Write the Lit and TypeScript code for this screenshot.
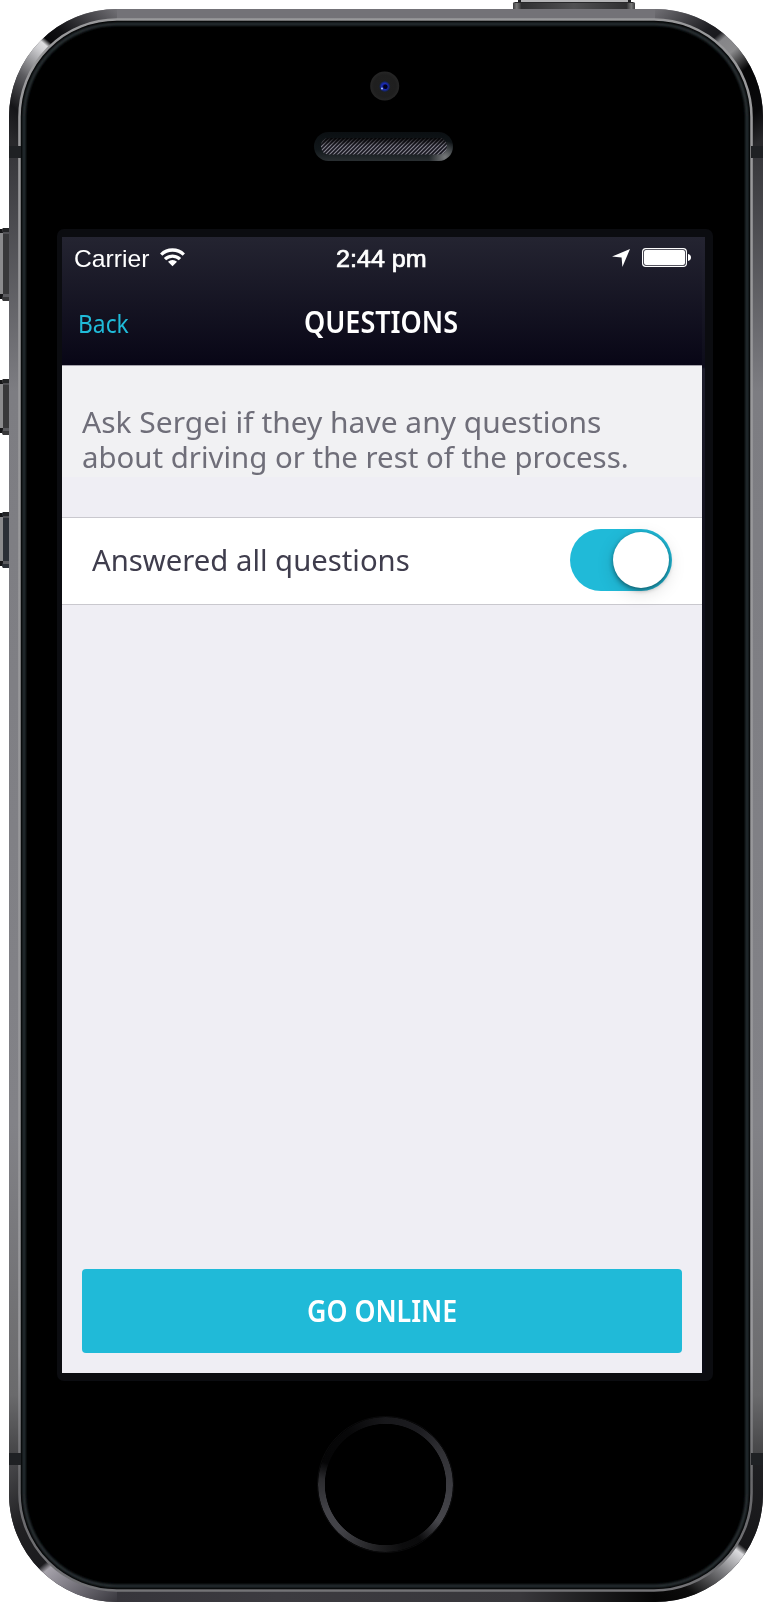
import { LitElement, html, css, svg } from "lit";
import { customElement, property, query } from "lit/decorators.js";

/** One line of text, condensed or widened to a given measure. */
@customElement("fit-text")
class FitText extends LitElement {
  @property({ type: Number }) measure = 0;
  @query("span") line!: HTMLSpanElement;
  static styles = css`
    :host { display: block; white-space: nowrap; }
    span { display: inline-block; transform-origin: 0 50%; }
  `;
  render() {
    return html`<span><slot></slot></span>`;
  }
  async firstUpdated() {
    this.fit();
    await document.fonts.ready;
    this.fit();
  }
  fit() {
    const w = this.line.offsetWidth;
    this.style.width = `${this.measure}px`;
    if (w) this.line.style.transform = `scaleX(${this.measure / w})`;
  }
}

/** Metal body, side keys, camera, speaker and home button. */
@customElement("phone-body")
class PhoneBody extends LitElement {
  static styles = css`
    :host { display: block; }
    svg { display: block; }
  `;
  sideKey(y: number, h: number, tone: string) {
    return svg`
      <rect x="0" y=${y + 2} width="5" height=${h - 4} fill="#8b8b8d"/>
      <rect x="0" y=${y + 1} width="3" height="4" fill="#151517"/>
      <rect x="0" y=${y + h - 7} width="3" height="5" fill="#151517"/>
      <path d="M3 ${y}H9V${y + h}H3Q1 ${y + h - 2} 3 ${y + h - 6}V${y + 5}Q1 ${y + 1} 3 ${y}Z" fill=${tone}/>
      <rect x="3" y=${y} width="6" height="4" fill="#242527"/>
      <rect x="3" y=${y + 4} width="6" height="2" fill="#505054"/>
      <rect x="3" y=${y + h - 7} width="6" height="3" fill="#5a5a5e"/>`;
  }
  render() {
    return html`<svg width="763" height="1602" viewBox="0 0 763 1602">
      <defs>
        <linearGradient id="side" x1="0" y1="0" x2="0" y2="1">
          <stop offset="0" stop-color="#737277"/><stop offset=".06" stop-color="#2a2a2d"/>
          <stop offset=".094" stop-color="#38383c"/><stop offset=".24" stop-color="#7d7d82"/>
          <stop offset=".7" stop-color="#828287"/><stop offset=".87" stop-color="#6a6a6c"/>
          <stop offset=".914" stop-color="#3e3e40"/><stop offset=".95" stop-color="#1c1c1e"/>
          <stop offset="1" stop-color="#343338"/>
        </linearGradient>
        <linearGradient id="tl" gradientUnits="userSpaceOnUse" x1="10" y1="140" x2="120" y2="10">
          <stop offset="0" stop-color="#29292c"/><stop offset=".16" stop-color="#151518"/>
          <stop offset=".34" stop-color="#5c5c60"/><stop offset=".52" stop-color="#d0d0d3"/>
          <stop offset=".56" stop-color="#dedee0"/><stop offset=".59" stop-color="#08080a"/>
          <stop offset=".68" stop-color="#101013"/><stop offset="1" stop-color="#737277"/>
        </linearGradient>
        <linearGradient id="tr" gradientUnits="userSpaceOnUse" x1="652" y1="10" x2="762" y2="140">
          <stop offset="0" stop-color="#737277"/><stop offset=".3" stop-color="#1d1d21"/>
          <stop offset=".36" stop-color="#1a1a1e"/><stop offset=".4" stop-color="#858588"/>
          <stop offset=".49" stop-color="#8a8a8c"/><stop offset=".62" stop-color="#050506"/>
          <stop offset=".85" stop-color="#08080a"/><stop offset="1" stop-color="#29292c"/>
        </linearGradient>
        <linearGradient id="bl" gradientUnits="userSpaceOnUse" x1="10" y1="1465" x2="120" y2="1601">
          <stop offset="0" stop-color="#47474a"/><stop offset=".3" stop-color="#202022"/>
          <stop offset=".56" stop-color="#1b1b1e"/><stop offset=".6" stop-color="#a5a2aa"/>
          <stop offset=".7" stop-color="#8a8790"/><stop offset="1" stop-color="#36353b"/>
        </linearGradient>
        <linearGradient id="br" gradientUnits="userSpaceOnUse" x1="660" y1="1601" x2="762" y2="1465">
          <stop offset="0" stop-color="#050505"/><stop offset=".15" stop-color="#0c0c0c"/>
          <stop offset=".35" stop-color="#77777a"/><stop offset=".51" stop-color="#dcdcdf"/>
          <stop offset=".55" stop-color="#161618"/><stop offset="1" stop-color="#1f1f22"/>
        </linearGradient>
        <linearGradient id="bottom">
          <stop offset="0" stop-color="#36353b"/><stop offset=".3" stop-color="#3c3b40"/>
          <stop offset=".75" stop-color="#38373b"/><stop offset="1" stop-color="#050505"/>
        </linearGradient>
        <linearGradient id="rim" x1="0" y1="0" x2="0" y2="1">
          <stop offset="0" stop-color="#99999b"/><stop offset=".85" stop-color="#98989b"/>
          <stop offset=".93" stop-color="#68686b"/><stop offset="1" stop-color="#737376"/>
        </linearGradient>
        <linearGradient id="top-key">
          <stop offset="0" stop-color="#3c3c3e"/><stop offset=".03" stop-color="#777"/>
          <stop offset=".07" stop-color="#303032"/><stop offset=".5" stop-color="#505052"/>
          <stop offset=".93" stop-color="#303032"/><stop offset=".97" stop-color="#777"/>
          <stop offset="1" stop-color="#3c3c3e"/>
        </linearGradient>
        <radialGradient id="camera"><stop offset="0" stop-color="#202020"/>
          <stop offset=".75" stop-color="#1f1f1f"/><stop offset="1" stop-color="#262626"/></radialGradient>
        <radialGradient id="lens"><stop offset="0" stop-color="#04042a"/>
          <stop offset=".55" stop-color="#1a2bb8"/><stop offset="1" stop-color="#152030"/></radialGradient>
        <linearGradient id="slot" x1="0" y1="0" x2="0" y2="1">
          <stop offset="0" stop-color="#0b0f12"/><stop offset=".6" stop-color="#11171a"/>
          <stop offset="1" stop-color="#292e31"/></linearGradient>
        <radialGradient id="glint" gradientUnits="userSpaceOnUse" cx="445" cy="157" r="16">
          <stop offset="0" stop-color="#77797b"/><stop offset="1" stop-color="#77797b" stop-opacity="0"/></radialGradient>
        <pattern id="mesh" width="4" height="4" patternUnits="userSpaceOnUse">
          <rect width="4" height="4" fill="#17161f"/>
          <path d="M-1 5L5 -1M-1 1L1 -1M3 5L5 3" stroke="#85848f" stroke-width="1.2"/>
        </pattern>
        <linearGradient id="shade" x1="0" y1="0" x2="0" y2="1">
          <stop offset="0" stop-color="#000" stop-opacity=".85"/><stop offset=".5" stop-color="#000" stop-opacity="0"/></linearGradient>
        <filter id="soft" x="-5%" y="-5%" width="110%" height="110%"><feGaussianBlur stdDeviation="1"/></filter>
      </defs>

      <rect x="519" y="0" width="112" height="3" fill="#b5b5b7"/>
      <path d="M518 0h3v2h-3zM628 0h3v2h-3z" fill="#202022"/>
      <rect x="513" y="2" width="122" height="8" rx="1.5" fill="url(#top-key)"/>
      <rect x="515" y="2" width="118" height="1" fill="#29292b"/>
      ${this.sideKey(228, 73, "#38383a")}
      ${this.sideKey(379, 56, "#38383a")}
      ${this.sideKey(512, 56, "#2b2f36")}

      <rect x="9" y="9" width="754" height="1593" rx="108" fill="url(#side)"/>
      <rect x="117" y="9" width="538" height="14" fill="#737277"/>
      <rect x="117" y="1588" width="538" height="14" fill="url(#bottom)"/>
      <g fill="none" stroke-width="12">
        <path d="M15 146V117A102 102 0 0 1 117 15" stroke="url(#tl)"/>
        <path d="M655 15A102 102 0 0 1 757 117V146" stroke="url(#tr)"/>
        <path d="M15 1465V1494A102 102 0 0 0 117 1596" stroke="url(#bl)"/>
        <path d="M655 1596A102 102 0 0 0 757 1494V1465" stroke="url(#br)"/>
      </g>
      <rect x="19" y="19" width="733" height="1572" rx="98" fill="#000"/>
      <rect x="19.5" y="19.5" width="732" height="1571" rx="97.5" fill="none" stroke="url(#rim)" stroke-width="2.6"/>
      <rect x="24" y="24" width="723" height="1562" rx="93" fill="none" stroke="#293136" stroke-width="3.2" filter="url(#soft)"/>
      <g fill="#1f2124">
        <rect x="9" y="146" width="12" height="12"/><rect x="751" y="146" width="12" height="12"/>
        <rect x="9" y="1453" width="12" height="12"/><rect x="751" y="1453" width="12" height="12"/>
      </g>

      <circle cx="384.7" cy="86" r="14.5" fill="url(#camera)"/>
      <circle cx="384.7" cy="86.5" r="5.5" fill="url(#lens)"/>
      <circle cx="385.5" cy="86.8" r="2.2" fill="#02021c"/>
      <circle cx="382" cy="88.5" r="1" fill="#a9c0ff"/>

      <rect x="314" y="132" width="139" height="29" rx="14.5" fill="url(#slot)"/>
      <rect x="314" y="132" width="139" height="29" rx="14.5" fill="url(#glint)"/>
      <rect x="321" y="138" width="126" height="16.5" rx="8" fill="url(#mesh)"/>
      <rect x="321" y="138" width="126" height="16.5" rx="8" fill="url(#shade)"/>
    </svg>`;
  }
}

@customElement("app-root")
class AppRoot extends LitElement {
  static styles = css`
    :host {
      display: grid; width: 763px; height: 1602px; background: #fff; overflow: hidden;
      font-family: "Noto Sans", sans-serif;
    }
    phone-body, .face { grid-area: 1 / 1; }
    .face { display: flex; flex-direction: column; align-items: flex-start; padding: 229px 0 0 57px; position: relative; box-sizing: border-box; }
    .bezel { width: 656px; height: 1152px; box-sizing: border-box; padding: 8px 8px 8px 5px; border-radius: 7px; background: #0b0c10; }
    .panel { width: 643px; height: 1136px; background: linear-gradient(#242431, #0d0c1a 130px, #1e1e2c 132px, #12121e 300px, #0b0c15 520px); }
    .screen { width: 640px; height: 1136px; display: flex; flex-direction: column; background: #efeef4; }
    header { height: 129px; background: linear-gradient(#242431, #080616); color: #fff; box-sizing: border-box; border-bottom: 1px solid #a5a3ab; }
    .status { display: grid; grid-template-columns: 1fr auto 1fr; height: 40px; align-items: center; padding: 0 11px 0 12px; font: 24px/40px "Liberation Sans", sans-serif; }
    .status svg, .ring { display: block; }
    .status fit-text { padding-top: 2px; margin-bottom: -1px; }
    .carrier { display: flex; align-items: center; gap: 11px; }
    .time { -webkit-text-stroke: .7px #fff; margin-left: -2px; }
    .power { display: flex; justify-content: flex-end; align-items: center; gap: 12px; }
    .nav { display: grid; grid-template-columns: 1fr auto 1fr; padding: 1px 18px 0 16px; height: 87px; align-items: baseline; line-height: 87px; box-sizing: border-box; }
    .back { color: #20bbd9; font-size: 25.5px; }
    .title { font-size: 31px; font-weight: 650; }
    .intro { height: 151px; box-sizing: border-box; padding: 38px 20px 0; color: #6f6e79; font-size: 29.5px; line-height: 35px; background: linear-gradient(#f1f1f3 111px, #efeef4 111px); }
    .row { height: 88px; box-sizing: border-box; border: solid #c9c8ce; border-width: 1px 0; background: #fff; display: flex; align-items: center; justify-content: space-between; padding: 0 30px; color: #3f3d4d; font-size: 29px; }
    .row fit-text { padding-bottom: 4px; }
    .toggle { width: 102px; height: 62px; padding: 3px; box-sizing: border-box; border-radius: 31px; background: #20bad8; display: flex; justify-content: flex-end; margin-top: -2px; }
    .knob { width: 56px; height: 56px; border-radius: 50%; background: #fff; box-shadow: 0 5px 18px #0002, 0 2px 5px #0007; }
    .go { margin: auto 20px 20px; height: 84px; border-radius: 4px; background: #20bad8; color: #fff; font-size: 31px; font-weight: 650; display: flex; align-items: center; justify-content: center; line-height: 82px; }
    .go fit-text { height: 84px; }
    .home { box-sizing: border-box; width: 137px; height: 137px; margin: 35px 0 0 260px; border-radius: 50%; border: 1px solid #0b0b0c; display: grid; place-items: center; }
    .ring { width: 135px; height: 135px; border-radius: 50%;
      background: conic-gradient(#18181b, #1b1b1f 30deg, #303034 60deg, #3b3b40 90deg, #46464b 125deg, #0a0a0b 148deg, #0c0c0d 165deg, #222224 190deg, #434348 225deg, #434348 245deg, #2b2b2e 275deg, #050506 290deg, #070708 325deg, #18181b);
      mask: radial-gradient(circle, transparent 60.3px, #000 61px); }
  `;
  render() {
    return html`
      <phone-body></phone-body>
      <div class="face">
        <div class="bezel"><div class="panel"><main class="screen">
          <header>
            <div class="status">
              <div class="carrier">
                <fit-text measure="75">Carrier</fit-text>
                <svg width="25" height="19" viewBox="0 0 25 19">
                  <g fill="none" stroke="#fff" stroke-width="3.3">
                    <path d="M1.2 6.6A16.2 16.2 0 0 1 23.8 6.6"/>
                    <path d="M5 11.2A10.6 10.6 0 0 1 20 11.2"/>
                  </g>
                  <path d="M12.5 18.3L8 13.8A6.4 6.4 0 0 1 17 13.8Z" fill="#fff"/>
                </svg>
              </div>
              <fit-text class="time" measure="91">2:44 pm</fit-text>
              <div class="power">
                <svg width="18" height="18" viewBox="0 0 18 18"><path d="M18 0L10.4 18L9.6 8.4L0 7.6Z" fill="#fff"/></svg>
                <svg width="49" height="19" viewBox="0 0 49 19">
                  <rect x=".6" y=".6" width="43.8" height="17.8" rx="3.2" fill="none" stroke="#fff" stroke-width="1.2"/>
                  <rect x="2" y="2" width="41" height="15" rx="2" fill="#fff"/>
                  <path d="M46 6C50 6.5 50 12.5 46 13Z" fill="#fff"/>
                </svg>
              </div>
            </div>
            <div class="nav">
              <fit-text class="back" measure="51">Back</fit-text>
              <fit-text class="title" measure="154">QUESTIONS</fit-text>
              <span></span>
            </div>
          </header>
          <div class="intro">
            <fit-text measure="519">Ask Sergei if they have any questions</fit-text>
            <fit-text measure="547">about driving or the rest of the process.</fit-text>
          </div>
          <div class="row">
            <fit-text measure="318">Answered all questions</fit-text>
            <div class="toggle"><div class="knob"></div></div>
          </div>
          <div class="go"><fit-text measure="150">GO ONLINE</fit-text></div>
        </main></div></div>
        <div class="home"><div class="ring"></div></div>
      </div>`;
  }
}
